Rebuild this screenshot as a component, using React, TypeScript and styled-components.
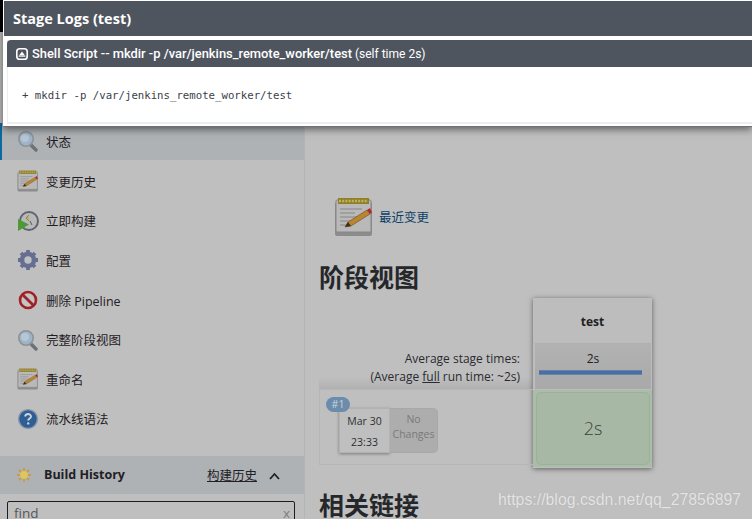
import React from "react";
import styled, { createGlobalStyle } from "styled-components";

const GlobalStyle = createGlobalStyle`
  html, body {
    margin: 0;
    padding: 0;
    height: 519px;
    overflow: hidden;
    background: #bfbfbf;
    font-family: "Open Sans", "Noto Sans CJK SC", sans-serif;
    color: #1f2024;
  }
`;

const Page = styled.div`
  position: relative;
  display: flex;
  width: 752px;
  height: 519px;
  overflow: hidden;
`;

// Sidebar
const Sidebar = styled.aside`
  width: 304px;
  flex: none;
  padding-top: 123px;
  border-right: 1px solid #b2b5b8;
`;

const TaskRow = styled.div<{ $active?: boolean }>`
  display: flex;
  align-items: center;
  gap: 7px;
  box-sizing: border-box;
  height: ${(p) => (p.$active ? "37px" : "39.6px")};
  padding-left: 17px;
  padding-bottom: ${(p) => (p.$active ? "1px" : "0")};
  margin-bottom: ${(p) => (p.$active ? "1.5px" : "0")};
  font-size: 12.5px;
  background: ${(p) => (p.$active ? "#aeb2b5" : "transparent")};
  box-shadow: ${(p) => (p.$active ? "inset 2px 0 0 #0b6aa2" : "none")};
`;

const TaskIcon = styled.span`
  display: flex;
  width: 22px;
  height: 22px;
  flex: none;
  filter: blur(0.4px);
`;

const TaskList = styled.div`
  display: flex;
  flex-direction: column;
`;

const HistoryBar = styled.div`
  display: flex;
  align-items: center;
  height: 38px;
  margin-top: 17px;
  padding-left: 17px;
  background: #aeb2b5;
  font-size: 12.5px;
`;

const HistoryTitle = styled.span`
  margin-left: 13px;
  font-weight: 700;
  font-size: 12.5px;
`;

const HistoryLink = styled.span`
  margin-left: auto;
  text-decoration: underline;
`;

const HistoryToggle = styled.span`
  display: flex;
  margin: 2px 24px 0 12px;
`;

const FindBox = styled.div`
  display: flex;
  justify-content: space-between;
  box-sizing: border-box;
  height: 30px;
  margin: 7px 9px 0 7px;
  padding: 2px 4px 0 6px;
  border: 1px solid #1d1d1d;
  border-radius: 2px;
  font-size: 13.5px;
  color: #55575a;
`;

const FindClear = styled.span`
  color: #7d7d7d;
`;

// Main column
const Main = styled.main`
  flex: 1;
  min-width: 0;
  padding: 197px 0 0 14px;
`;

const RecentChanges = styled.div`
  display: flex;
  align-items: center;
  gap: 5px;
  margin-left: 15px;
  font-size: 12.5px;
  color: #0b3f68;
`;

const RecentIcon = styled.span`
  display: flex;
  filter: blur(0.4px);
`;

const RecentLabel = styled.span`
  padding-bottom: 2px;
`;

const Heading = styled.h1`
  margin: 0;
  font-size: 25px;
  line-height: 32px;
  font-weight: 700;
  color: #26272a;
`;

const StageHeading = styled(Heading)`
  margin-top: 24px;
`;

const StageView = styled.div`
  display: flex;
  width: 333px;
  margin-top: 5px;
`;

const StageLeft = styled.div`
  width: 214px;
  padding-top: 47px;
  flex: none;
`;

const Averages = styled.div`
  box-sizing: border-box;
  height: 44px;
  padding: 5px 13px 0 0;
  text-align: right;
  font-size: 12px;
  line-height: 18px;
  color: #2a2b30;
  background: linear-gradient(#bfbfbf 72%, #b1b1b1);
`;

const Underlined = styled.span`
  text-decoration: underline;
`;

const BuildRow = styled.div`
  position: relative;
  display: flex;
  box-sizing: border-box;
  height: 76px;
  padding: 18px 0 0 19px;
  border: 1px solid #b6b6b6;
  border-right: 0;
`;

const BuildBadge = styled.span`
  position: absolute;
  left: 6px;
  top: 7px;
  width: 24px;
  height: 15px;
  border-radius: 8px;
  background: #6b8cab;
  color: #c9d3dc;
  font-size: 10.5px;
  line-height: 15px;
  text-align: center;
`;

const BuildDate = styled.div`
  box-sizing: border-box;
  width: 51px;
  height: 45px;
  padding-top: 2px;
  background: #bfbfbf;
  border: 1px solid #b2b2b2;
  box-shadow: 0 1px 3px rgba(0, 0, 0, 0.35);
  text-align: center;
  font-size: 10.5px;
  line-height: 21px;
  color: #2e2f33;
`;

const BuildChanges = styled.div`
  box-sizing: border-box;
  width: 48px;
  height: 45px;
  padding-top: 3px;
  border: 1px solid #a8a8a8;
  border-left: 0;
  border-radius: 0 5px 5px 0;
  background: #adadad;
  text-align: center;
  font-size: 10.5px;
  line-height: 15px;
  color: #7a7a7a;
`;

const StageCard = styled.div`
  width: 119px;
  height: 170px;
  flex: none;
  box-shadow: 0 1px 5px rgba(0, 0, 0, 0.5);
  background: #bdbdbd;
`;

const StageName = styled.div`
  height: 45px;
  font-size: 12px;
  font-weight: 700;
  line-height: 48px;
  text-align: center;
  color: #1e1f22;
`;

const StageAverage = styled.div`
  box-sizing: border-box;
  height: 46px;
  padding: 6px 4px 0;
  margin: 0 1px 0 2px;
  border-top: 1px solid #b0b0b0;
  background: linear-gradient(#b2b2b2, #a9a9a9);
  text-align: center;
  font-size: 12px;
  line-height: 17px;
`;

const AverageBar = styled.div`
  box-sizing: border-box;
  height: 5px;
  margin: 3px 5px 0 0;
  background: #4a6fa3;
  border-top: 1px solid #6683ad;
  border-bottom: 1px solid #6683ad;
`;

const StageCellWrap = styled.div`
  padding: 2px 2px 2px 3px;
  margin-top: 1px;
  background: #abbca9;
`;

const StageCell = styled.div`
  box-sizing: border-box;
  height: 73px;
  border: 1px solid #9ab29a;
  border-radius: 5px;
  background: #a7b9a5;
  text-align: center;
  font-size: 18px;
  font-weight: 300;
  line-height: 71px;
  color: #3b4040;
`;

const SectionHeading = styled(Heading)`
  margin-top: 21px;
`;

// Modal over the page
const Modal = styled.div`
  position: absolute;
  left: 3px;
  top: 0;
  right: 0;
  height: 127px;
  box-sizing: border-box;
  padding-top: 1px;
  background: #fff;
  border-bottom: 1px solid #6f7173;
  box-shadow: 0 2px 8px rgba(0, 0, 0, 0.55);
`;

const CornerMark = styled.div`
  position: absolute;
  left: 0;
  top: 0;
  width: 3px;
  height: 32px;
  background: #000;
`;

const ModalTitle = styled.div`
  height: 35px;
  margin-left: 1px;
  padding-left: 9px;
  background: #4f555f;
  color: #fff;
  font-size: 14.5px;
  font-weight: 700;
  line-height: 36px;
`;

const LogPanel = styled.div`
  margin: 4px 0 0 4px;
  height: 82px;
  border-left: 1px solid #eceef1;
  border-bottom: 2px solid #eceef1;
`;

const LogHeader = styled.div`
  display: flex;
  align-items: center;
  gap: 4px;
  height: 27px;
  padding-left: 9px;
  margin-left: -1px;
  border-radius: 4px 0 0 0;
  background: #4f555f;
  color: #fff;
  font-family: Roboto, "Open Sans", sans-serif;
  font-size: 12px;
`;

const LogStrong = styled.span`
  font-size: 12.9px;
  font-weight: 500;
`;

const LogLine = styled.pre`
  margin: 0;
  padding: 22px 0 0 14px;
  font-family: "DejaVu Sans Mono", "Liberation Mono", monospace;
  font-size: 10.7px;
  line-height: 14px;
  color: #3a3f4a;
`;

const Watermark = styled.div`
  position: absolute;
  left: 498px;
  top: 490px;
  font-family: "Liberation Sans", Arial, sans-serif;
  font-size: 15.85px;
  line-height: 20px;
  color: #e4e4e4;
  text-shadow: 0 0 1px #a8a8a8;
`;

const NotepadIcon = ({ size }: { size: number }) => (
  <svg width={size} height={size} viewBox="0 0 40 40">
    <rect x="1" y="5" width="37" height="34" rx="2" fill="#8c8c8c" />
    <rect x="2" y="3" width="35" height="32" rx="1" fill="#b9b9b9" stroke="#868686" />
    <rect x="4" y="1" width="31" height="6" fill="#8f7e2a" />
    <path d="M5 4h29" stroke="#c2b258" strokeWidth="2.4" strokeDasharray="2 1.2" />
    <path d="M6 12h22M6 16h15M6 20h18M6 24h12M6 28h10" stroke="#868686" strokeWidth="1" />
    <path d="M11 30l3-5 19-12 3 4-19 12z" fill="#b98533" stroke="#6b4c1c" strokeWidth="0.6" />
    <path d="M33 13l3 4 2-1.500-2-4.500z" fill="#b0282c" />
    <path d="M11 30l3-5 3 4z" fill="#3a3020" />
  </svg>
);

const MagnifierIcon = () => (
  <svg width="22" height="22" viewBox="0 0 22 22">
    <path d="M13 14l6 6" stroke="#6c7177" strokeWidth="3.4" strokeLinecap="round" />
    <circle cx="9" cy="9" r="7.2" fill="#9fb4c8" stroke="#8d9298" strokeWidth="1.6" />
    <circle cx="8" cy="8" r="4" fill="#b7c6d3" />
  </svg>
);

const BuildIcon = () => (
  <svg width="22" height="22" viewBox="0 0 22 22">
    <circle cx="12" cy="11" r="9" fill="#b9b9b9" stroke="#5f6470" strokeWidth="2" />
    <path d="M12 5l-3 3 3 3" fill="#c9b24a" stroke="#6b6b55" strokeWidth="0.7" />
    <path d="M13 11l2 4" stroke="#55565a" strokeWidth="1" />
    <path d="M1 9l11 5.500L1 21z" fill="#4b9a35" />
  </svg>
);

const GearIcon = () => (
  <svg width="22" height="22" viewBox="0 0 22 22">
    <circle cx="11" cy="11" r="6" fill="none" stroke="#666f92" strokeWidth="4.6" />
    <path
      d="M11 1v4M11 17v4M1 11h4M17 11h4M4 4l3 3M15 15l3 3M18 4l-3 3M7 15l-3 3"
      stroke="#666f92"
      strokeWidth="3.8"
    />
  </svg>
);

const NoEntryIcon = () => (
  <svg width="22" height="22" viewBox="0 0 22 22">
    <circle cx="11" cy="11" r="8" fill="#c4c4c4" stroke="#a02126" strokeWidth="2.6" />
    <path d="M5.400 5.400l11.200 11.200" stroke="#a02126" strokeWidth="2.8" />
  </svg>
);

const HelpIcon = () => (
  <svg width="22" height="22" viewBox="0 0 22 22">
    <circle cx="11" cy="11" r="9.400" fill="#2f5e95" stroke="#8b97a6" strokeWidth="1.4" />
    <path
      d="M8.200 8.600c0-3.400 5.800-3.400 5.800 0 0 2-2.800 2-2.800 4"
      fill="none"
      stroke="#c9d4df"
      strokeWidth="1.9"
    />
    <circle cx="11.200" cy="15.400" r="1.200" fill="#c9d4df" />
  </svg>
);

const SunIcon = () => (
  <svg width="14" height="14" viewBox="0 0 14 14">
    <path d="M7 0v14M0 7h14M2 2l10 10M12 2L2 12" stroke="#c79a4e" strokeWidth="1.8" />
    <circle cx="7" cy="7" r="4" fill="#dcc660" />
  </svg>
);

const ChevronUp = () => (
  <svg width="11" height="8" viewBox="0 0 11 8">
    <path d="M1 7l4.500-5 4.500 5" fill="none" stroke="#1f2024" strokeWidth="1.8" />
  </svg>
);

const CollapseIcon = () => (
  <svg width="12" height="12" viewBox="0 0 12 12">
    <rect x="0.8" y="0.8" width="10.400" height="10.400" rx="2.800" fill="none" stroke="#fff" strokeWidth="1.600" />
    <path d="M3 7.400L6 3.400l3 4z" fill="#fff" />
    <path d="M2.500 8.200h7" stroke="#fff" strokeWidth="1" />
  </svg>
);

const tasks = [
  { label: "变更历史", icon: <NotepadIcon size={22} /> },
  { label: "立即构建", icon: <BuildIcon /> },
  { label: "配置", icon: <GearIcon /> },
  { label: "删除 Pipeline", icon: <NoEntryIcon /> },
  { label: "完整阶段视图", icon: <MagnifierIcon /> },
  { label: "重命名", icon: <NotepadIcon size={22} /> },
  { label: "流水线语法", icon: <HelpIcon /> },
];

export default function App() {
  return (
    <Page>
      <GlobalStyle />
      <Sidebar>
        <TaskRow $active>
          <TaskIcon>
            <MagnifierIcon />
          </TaskIcon>
          状态
        </TaskRow>
        <TaskList>
          {tasks.map((task) => (
            <TaskRow key={task.label}>
              <TaskIcon>{task.icon}</TaskIcon>
              {task.label}
            </TaskRow>
          ))}
        </TaskList>
        <HistoryBar>
          <SunIcon />
          <HistoryTitle>Build History</HistoryTitle>
          <HistoryLink>构建历史</HistoryLink>
          <HistoryToggle>
            <ChevronUp />
          </HistoryToggle>
        </HistoryBar>
        <FindBox>
          find
          <FindClear>x</FindClear>
        </FindBox>
      </Sidebar>

      <Main>
        <RecentChanges>
          <RecentIcon>
            <NotepadIcon size={40} />
          </RecentIcon>
          <RecentLabel>最近变更</RecentLabel>
        </RecentChanges>
        <StageHeading>阶段视图</StageHeading>
        <StageView>
          <StageLeft>
            <Averages>
              Average stage times:
              <br />
              (Average <Underlined>full</Underlined> run time: ~2s)
            </Averages>
            <BuildRow>
              <BuildBadge>#1</BuildBadge>
              <BuildDate>
                Mar 30
                <br />
                23:33
              </BuildDate>
              <BuildChanges>
                No
                <br />
                Changes
              </BuildChanges>
            </BuildRow>
          </StageLeft>
          <StageCard>
            <StageName>test</StageName>
            <StageAverage>
              2s
              <AverageBar />
            </StageAverage>
            <StageCellWrap>
              <StageCell>2s</StageCell>
            </StageCellWrap>
          </StageCard>
        </StageView>
        <SectionHeading>相关链接</SectionHeading>
      </Main>

      <CornerMark />
      <Modal>
        <ModalTitle>Stage Logs (test)</ModalTitle>
        <LogPanel>
          <LogHeader>
            <CollapseIcon />
            <span>
              <LogStrong>Shell Script -- mkdir -p /var/jenkins_remote_worker/test</LogStrong> (self time 2s)
            </span>
          </LogHeader>
          <LogLine>+ mkdir -p /var/jenkins_remote_worker/test</LogLine>
        </LogPanel>
      </Modal>
      <Watermark>https://blog.csdn.net/qq_27856897</Watermark>
    </Page>
  );
}
